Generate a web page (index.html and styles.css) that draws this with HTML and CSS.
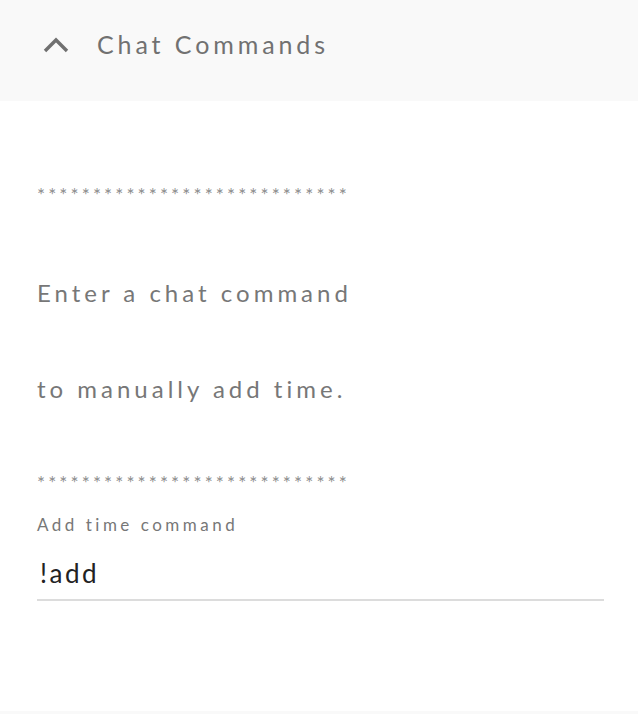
FILE: index.html
```html
<!DOCTYPE html>
<html>
<head>
<meta charset="utf-8">
<link rel="stylesheet" href="styles.css">
</head>
<body>
<section class="panel">
  <header class="panel-header">
    <svg class="chevron" width="26" height="16" viewBox="0 0 26 16"><path d="M2 14 L13 3 L24 14" fill="none" stroke="#707070" stroke-width="3.4"/></svg>
    <h2 class="panel-title">Chat Commands</h2>
  </header>
  <div class="panel-body">
    <p class="stars first">****************************</p>
    <p class="desc d1">Enter a chat command</p>
    <p class="desc d2">to manually add time.</p>
    <p class="stars second">****************************</p>
    <label class="field">
      <span class="field-label">Add time command</span>
      <span class="field-input">!add</span>
    </label>
  </div>
</section>
<div class="next-section"></div>
</body>
</html>
```
FILE: styles.css
```css
html, body { margin: 0; padding: 0; background: #fff; }
body { font-family: Lato, "Open Sans", sans-serif; width: 638px; height: 714px; overflow: hidden; }
.panel-header {
  height: 101px;
  background: #f9f9f9;
  display: flex;
  align-items: flex-start;
  padding: 29px 0 0 43px;
  box-sizing: border-box;
}
.chevron { display: block; margin-right: 28px; margin-top: 8px; }
.panel-title {
  margin: 0;
  font-size: 25px;
  line-height: 30px;
  font-weight: 400;
  color: #717171;
  letter-spacing: 3.9px;
}
.panel-body { padding: 0 34px 0 37px; }
.stars {
  margin: 0;
  font-size: 19px;
  color: #8c8c8c;
  letter-spacing: 3.1px;
  line-height: 20px;
}
.stars.first { padding-top: 84px; }
.desc {
  margin: 0;
  font-size: 24px;
  color: #777;
  letter-spacing: 4px;
  line-height: 30px;
}
.desc.d1 { padding-top: 73px; }
.desc.d2 { padding-top: 66px; }
.stars.second { padding-top: 69px; }
.field { display: block; }
.field-label {
  display: block;
  margin-top: 22px;
  font-size: 17px;
  color: #777;
  letter-spacing: 3.5px;
  line-height: 20px;
}
.field-input {
  display: block;
  margin-top: 23px;
  padding-left: 3px;
  font-size: 26px;
  color: #222;
  letter-spacing: 2.5px;
  line-height: 30px;
  padding-bottom: 11px;
  border-bottom: 2px solid #dcdcdc;
}
.next-section {
  margin-top: 110px;
  height: 6px;
  background: #f9f9f9;
}
```
